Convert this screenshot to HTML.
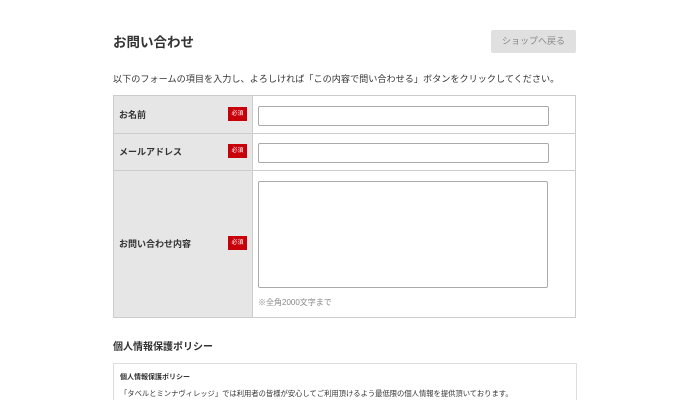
<!DOCTYPE html>
<html><head><meta charset="utf-8"><style>
*{margin:0;padding:0;box-sizing:border-box}
html,body{width:688px;height:400px;overflow:hidden}
body{background:#fff;font-family:"Liberation Sans","Noto Sans CJK JP",sans-serif;color:#333;position:relative}
.a{position:absolute}
</style></head><body>
<div class="a" style="left:113px;top:31px;font-size:13.5px;font-weight:bold;color:#333">お問い合わせ</div>
<div class="a" style="left:491px;top:30px;width:85px;height:23px;background:#e0e0e0;border-radius:2px;color:#888;font-size:9px;line-height:23px;text-align:center">ショップへ戻る</div>
<div class="a" style="left:113px;top:71px;font-size:9.15px;color:#333;white-space:nowrap">以下のフォームの項目を入力し、よろしければ「この内容で問い合わせる」ボタンをクリックしてください。</div>
<div class="a" style="left:113px;top:95px;width:463px;height:223px;border:1px solid #ccc"></div>
<div class="a" style="left:114px;top:96px;width:139px;height:221px;background:#e6e6e6;border-right:1px solid #ccc"></div>
<div class="a" style="left:114px;top:133px;width:461px;height:1px;background:#ccc"></div>
<div class="a" style="left:114px;top:170px;width:461px;height:1px;background:#ccc"></div>
<div class="a" style="left:119px;top:108px;font-size:9px;font-weight:bold">お名前</div>
<div class="a" style="left:119px;top:145px;font-size:9px;font-weight:bold">メールアドレス</div>
<div class="a" style="left:119px;top:237px;font-size:9px;font-weight:bold">お問い合わせ内容</div>
<div class="a" style="left:228px;top:107px;width:19px;height:14px;background:#c8000a;color:#fff;font-size:6px;line-height:14px;text-align:center">必須</div>
<div class="a" style="left:228px;top:144px;width:19px;height:14px;background:#c8000a;color:#fff;font-size:6px;line-height:14px;text-align:center">必須</div>
<div class="a" style="left:228px;top:236px;width:19px;height:14px;background:#c8000a;color:#fff;font-size:6px;line-height:14px;text-align:center">必須</div>
<div class="a" style="left:258px;top:106px;width:291px;height:20px;border:1px solid #aaa;border-radius:2px"></div>
<div class="a" style="left:258px;top:143px;width:291px;height:20px;border:1px solid #aaa;border-radius:2px"></div>
<div class="a" style="left:258px;top:181px;width:290px;height:107px;border:1px solid #aaa;border-radius:2px"></div>
<div class="a" style="left:258px;top:297px;font-size:8px;color:#888">※全角2000文字まで</div>
<div class="a" style="left:113px;top:338px;font-size:10px;font-weight:bold">個人情報保護ポリシー</div>
<div class="a" style="left:113px;top:363px;width:464px;height:37px;border:1px solid #ddd;border-bottom:none"></div>
<div class="a" style="left:120px;top:372px;font-size:7px;font-weight:bold">個人情報保護ポリシー</div>
<div class="a" style="left:120px;top:389px;font-size:7.3px;line-height:10px;white-space:nowrap">「タベルとミンナヴィレッジ」では利用者の皆様が安心してご利用頂けるよう最低限の個人情報を提供頂いております。</div>
</body></html>
